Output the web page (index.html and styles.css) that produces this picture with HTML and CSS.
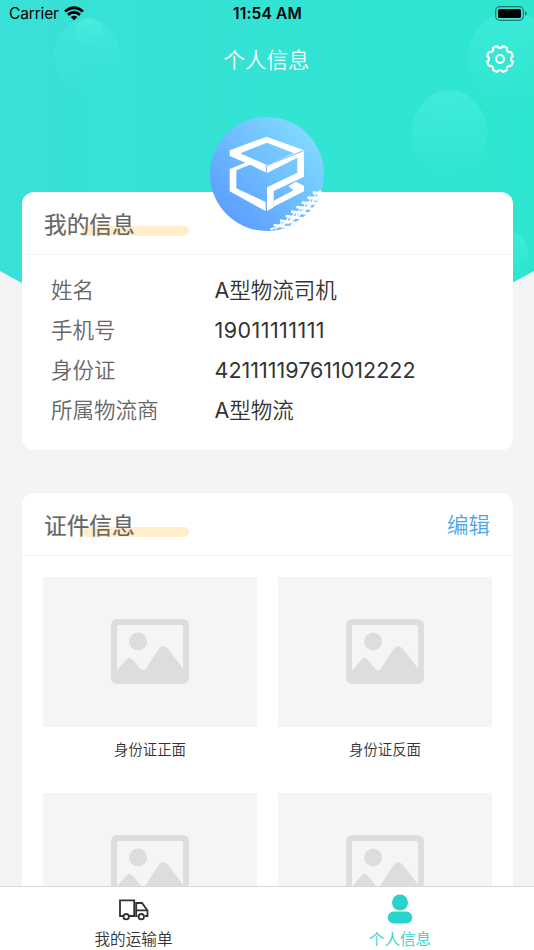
FILE: index.html
```html
<!DOCTYPE html>
<html lang="zh-CN">
<head>
<meta charset="utf-8">
<title>个人信息</title>
<link rel="stylesheet" href="styles.css">
</head>
<body>
<svg class="backdrop" width="534" height="350" viewBox="0 0 534 350">
  <defs>
    <linearGradient id="bg" x1="0" y1="0" x2="1" y2="0"><stop offset="0" stop-color="#39e0d8"/><stop offset="1" stop-color="#2de6d0"/></linearGradient>
    <linearGradient id="bub" x1="0" y1="0" x2="0" y2="1"><stop offset="0" stop-color="#5ff5ea" stop-opacity=".36"/><stop offset="1" stop-color="#5ff5ea" stop-opacity="0"/></linearGradient>
  </defs>
  <path d="M0 0H534V271Q267 423 0 271Z" fill="url(#bg)"/>
  <g fill="url(#bub)">
    <ellipse cx="87.500" cy="56" rx="33" ry="38" opacity=".6"/>
    <ellipse cx="89" cy="33" rx="14" ry="15"/>
    <ellipse cx="449.500" cy="134" rx="38" ry="44"/>
    <ellipse cx="511" cy="58" rx="43" ry="46" opacity=".8"/>
    <ellipse cx="510" cy="253" rx="18" ry="21"/>
  </g>
</svg>
<div class="screen">
  <div class="status">
    <div class="carrier"><span>Carrier</span>
      <svg width="20" height="15" viewBox="0 0 20 15" fill="none" stroke="#000" stroke-width="2.900"><path d="M1 5.500Q10-2.200 19 5.500M4 8.900Q10 3.800 16 8.900"/><path d="M10 14.200 6.700 11Q10 8.300 13.300 11Z" fill="#000" stroke="none"/></svg>
    </div>
    <div class="clock">11:54 AM</div>
    <svg class="battery" width="33" height="15" viewBox="0 0 33 15"><rect x=".7" y=".7" width="27.600" height="13.600" rx="4" fill="none" stroke="#168075" stroke-width="1.200"/><rect x="3" y="2.900" width="23" height="9.200" rx="1.700"/><path d="M30 5.300Q32 6 32 7.500T30 9.700Z" fill="#168075"/></svg>
  </div>
  <header class="nav">
    <h1>个人信息</h1>
    <svg class="gear" width="30" height="30" viewBox="-15 -15 30 30" fill="none" stroke="#fff" stroke-width="2.200" stroke-linejoin="round"><circle r="4"/><path d="M-2.800-12.900-1.800-11.700Q0-10.400 1.800-11.700L2.800-12.900 6.900-11.200 6.800-9.500Q7.200-7.200 9.500-6.800L11.200-6.900 12.900-2.800 11.700-1.800Q10.400 0 11.700 1.800L12.900 2.800 11.200 6.900 9.500 6.800Q7.200 7.200 6.800 9.500L6.900 11.200 2.800 12.900 1.800 11.700Q0 10.400-1.800 11.700L-2.800 12.900-6.900 11.200-6.800 9.500Q-7.200 7.200-9.500 6.800L-11.200 6.900-12.900 2.800-11.700 1.800Q-10.400 0-11.700-1.800L-12.900-2.800-11.200-6.900-9.500-6.800Q-7.200-7.200-6.800-9.500L-6.900-11.200Z"/></svg>
  </header>
  <main>
    <section class="card profile">
      <svg class="avatar" width="114" height="114" viewBox="31 21 342 342">
        <defs><linearGradient id="av" x1=".15" y1=".85" x2=".85" y2=".15"><stop offset="0" stop-color="#5d9fff"/><stop offset="1" stop-color="#80d9ff"/></linearGradient><clipPath id="disc"><circle cx="202" cy="192" r="172"/></clipPath></defs>
        <circle cx="202" cy="192" r="171" fill="url(#av)"/>
        <path fill="#fff" fill-rule="evenodd" d="M90 121 201 80 313 121V200L222 243V292L202 303V232L293 188V143L202 189 151 164 110 181V235L198 276V303L90 244V177L137 158 90 138ZM122 130 202 165 283 130 202 98Z"/>
        <path fill="#fff" d="M289 215 313 228V244L222 290V272L282 241 266 229Z"/>
        <path d="M200 166V190M202 166 312 122" stroke="#71b9ff" stroke-width="3"/>
        <g clip-path="url(#disc)" fill="none" stroke="#fff">
          <path d="M212 358Q305 330 374 236" stroke-width="6" stroke-dasharray="13 3"/>
          <path d="M219 374Q322 345 382 255" stroke-width="16" stroke-dasharray="17 3"/>
          <path d="M222 345 270 353M241 332 292 339M258 318 309 325M274 305 326 311M290 291 342 297M306 278 354 281M323 263 367 266M339 248 374 250" stroke-width="8"/>
          <path d="M227 359 251 333M246 352 268 321M264 343 285 308M281 331 302 294M297 319 318 281M314 306 333 267M330 292 348 253M347 274 362 240" stroke-width="4"/>
        </g>
      </svg>
      <div class="card-head"><h2>我的信息</h2></div>
      <dl class="info">
        <dt>姓名</dt><dd><span class="latin">A</span>型物流司机</dd>
        <dt>手机号</dt><dd class="latin phone">19011111111</dd>
        <dt>身份证</dt><dd class="latin">421111197611012222</dd>
        <dt>所属物流商</dt><dd><span class="latin">A</span>型物流</dd>
      </dl>
    </section>
    <section class="card documents">
      <div class="card-head"><h2>证件信息</h2><a class="edit">编辑</a></div>
      <div class="photos">
        <figure><div class="thumb"><svg width="78" height="65" viewBox="0 0 78 65"><use href="#photo"/></svg></div><figcaption>身份证正面</figcaption></figure>
        <figure><div class="thumb"><svg width="78" height="65" viewBox="0 0 78 65"><use href="#photo"/></svg></div><figcaption>身份证反面</figcaption></figure>
        <figure><div class="thumb"><svg width="78" height="65" viewBox="0 0 78 65"><use href="#photo"/></svg></div></figure>
        <figure><div class="thumb"><svg width="78" height="65" viewBox="0 0 78 65"><use href="#photo"/></svg></div></figure>
      </div>
    </section>
  </main>
  <nav class="tabs">
    <div class="tab"><svg width="30" height="22" viewBox="0 0 30 22" fill="none" stroke="#333" stroke-width="1.800"><path d="M4 17H1V1.400H15.200V17H10M18.500 17H17.200V4H23L28.500 11.500V17H26M18 11.300H28"/><circle cx="7.200" cy="17.700" r="2.700"/><circle cx="22.300" cy="17.700" r="2.700"/></svg><span>我的运输单</span></div>
    <div class="tab active"><svg width="26" height="30" viewBox="0 0 26 30" fill="#29d4cc"><circle cx="13" cy="8.500" r="8"/><rect x=".8" y="17.500" width="24.400" height="12" rx="6"/></svg><span>个人信息</span></div>
  </nav>
</div>
<svg class="symbols" width="0" height="0"><defs><symbol id="photo" viewBox="0 0 78 65"><path fill="#ddd" fill-rule="evenodd" d="M7 0H71Q78 0 78 7V58Q78 65 71 65H7Q0 65 0 58V7Q0 0 7 0ZM8 6Q6 6 6 8V51.500L15 41Q18.500 37 22 41L29 49.500Q32 53 35 49.500L47 31Q52 24 57 30L72 49.500V8Q72 6 70 6Z"/><circle cx="27" cy="22.500" r="9" fill="#ddd"/></symbol></defs></svg>
</body>
</html>
```

FILE: styles.css
```css
* { box-sizing: border-box; }
body, h1, h2, dl, dd, figure { margin: 0; }
body {
  width: 534px;
  height: 950px;
  overflow: hidden;
  background: #f4f4f4;
  color: #333;
  font-family: Inter, "Noto Sans CJK SC", sans-serif;
}
svg { display: block; flex-shrink: 0; }
.backdrop { position: absolute; left: 0; top: 0; }
.symbols { position: absolute; }
.screen { position: relative; height: 950px; display: flex; flex-direction: column; }
.status {
  height: 28px;
  display: grid;
  grid-template-columns: 1fr auto 1fr;
  align-items: center;
  padding: 0 7px 0 9px;
  color: #000;
  font-size: 15.500px;
  line-height: 28px;
}
.carrier { display: flex; gap: 6px; align-items: center; letter-spacing: -0.150px; }
.carrier svg { margin: -2px 0 0 -1px; }
.clock { font-weight: 600; letter-spacing: 0.150px; padding-right: 1px; }
.battery { justify-self: end; margin: -2px -1px 0 0; }
.nav { height: 62px; display: grid; grid-template-columns: 1fr auto 1fr; align-items: center; padding: 0 19px 0 18px; }
h1 { grid-column: 2; color: #fff; font-size: 21.500px; font-weight: 350; line-height: 62px; padding-top: 1px; }
.gear { justify-self: end; margin-top: -2px; }
main { flex: 1; min-height: 0; overflow: hidden; padding: 102px 21px 0 22px; display: flex; flex-direction: column; gap: 43px; }
.card { position: relative; flex-shrink: 0; background: #fff; border-radius: 12px; }
.profile { height: 258px; }
.avatar { position: absolute; left: 188px; top: -75px; }
.card-head { height: 63px; padding: 0 22px; border-bottom: 1px solid #f3f3f3; display: flex; justify-content: space-between; align-items: center; line-height: 61px; }
h2 { position: relative; z-index: 0; color: #666; font-size: 22.700px; font-weight: 400; padding-top: 3px; -webkit-text-stroke: 0.200px #666; }
h2::before { content: ""; position: absolute; z-index: -1; left: 38px; top: 35px; width: 107px; height: 10px; border-radius: 5px; background: #ffedcc; }
.edit { color: #4ca6ee; font-size: 21.500px; font-weight: 350; padding-top: 3px; margin-right: 1px; }
.info { display: grid; grid-template-columns: 163.500px 1fr; grid-auto-rows: 40px; padding: 15px 0 0 29px; font-size: 21.500px; line-height: 40px; }
dt { color: #666; font-weight: 350; }
dd { font-weight: 350; white-space: nowrap; }
.latin { font-weight: 400; }
.phone { letter-spacing: 0.450px; }
.photos { display: grid; grid-template-columns: 214px 214px; column-gap: 21px; padding: 21px 21px 0; }
figure { height: 216px; }
.thumb { height: 150px; background: #f5f5f5; display: flex; justify-content: center; align-items: center; padding: 0 1px 2px 0; }
figcaption { text-align: center; font-size: 14.400px; font-weight: 350; line-height: 46px; }
.tabs { height: 64px; flex-shrink: 0; background: #fff; border-top: 1px solid #d8d8d8; display: grid; grid-template-columns: 1fr 1fr; }
.tab { display: flex; flex-direction: column; align-items: center; padding-top: 12px; font-size: 15.600px; font-weight: 350; line-height: 24px; gap: 7px; }
.active { color: #29d4cc; padding-top: 7px; padding-right: 1px; gap: 4px; }
```
